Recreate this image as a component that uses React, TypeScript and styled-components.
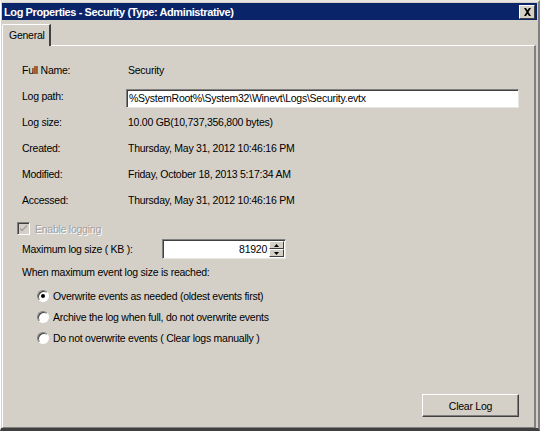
import React from 'react';
import styled, { createGlobalStyle } from 'styled-components';

const GlobalStyle = createGlobalStyle`
  html, body {
    margin: 0;
    padding: 0;
    background: #d4d0c8;
  }
  body {
    font-family: "Liberation Sans", Arial, sans-serif;
    font-size: 10.5px;
    letter-spacing: -0.25px;
    color: #000;
  }
`;

const info = [
  { label: 'Full Name:', value: 'Security' },
  { label: 'Log path:', value: '%SystemRoot%\\System32\\Winevt\\Logs\\Security.evtx', input: true },
  { label: 'Log size:', value: '10.00 GB(10,737,356,800 bytes)' },
  { label: 'Created:', value: 'Thursday, May 31, 2012 10:46:16 PM' },
  { label: 'Modified:', value: 'Friday, October 18, 2013 5:17:34 AM' },
  { label: 'Accessed:', value: 'Thursday, May 31, 2012 10:46:16 PM' },
];

const policies = [
  { label: 'Overwrite events as needed (oldest events first)', checked: true },
  { label: 'Archive the log when full, do not overwrite events', checked: false },
  { label: 'Do not overwrite events ( Clear logs manually )', checked: false },
];

export default function App() {
  return (
    <>
      <GlobalStyle />
      <Window>
        <TitleBar>
          <Title>Log Properties - Security (Type: Administrative)</Title>
          <CloseButton>
            <svg width="9" height="8" viewBox="0 0 9 8">
              <path d="M1 0h2l1.5 2.2L6 0h2L5.5 4 8 8H6L4.5 5.8 3 8H1l2.5-4z" fill="#000" />
            </svg>
          </CloseButton>
        </TitleBar>
        <Body>
          <TabStrip>
            <Tab>General</Tab>
          </TabStrip>
          <Panel>
            <InfoGrid>
              {info.map((row) => (
                <React.Fragment key={row.label}>
                  <Label>{row.label}</Label>
                  {row.input ? (
                    <PathInput>{row.value}</PathInput>
                  ) : (
                    <Value>{row.value}</Value>
                  )}
                </React.Fragment>
              ))}
            </InfoGrid>

            <EnableRow>
              <CheckBox>
                <svg width="9" height="9" viewBox="0 0 9 9">
                  <path d="M1 3.5l2 2 5-5v2l-5 5-2-2z" fill="#a0a0a0" />
                </svg>
              </CheckBox>
              <DisabledText>Enable logging</DisabledText>
            </EnableRow>

            <Settings>
              <SizeRow>
                <SizeLabel>Maximum log size ( KB ):</SizeLabel>
                <SpinBox>
                  <SpinValue>81920</SpinValue>
                  <Spinner>
                    <SpinArrow>
                      <svg width="5" height="3" viewBox="0 0 5 3"><path d="M2.5 0L5 3H0z" fill="#000" /></svg>
                    </SpinArrow>
                    <SpinArrow>
                      <svg width="5" height="3" viewBox="0 0 5 3"><path d="M0 0h5L2.5 3z" fill="#000" /></svg>
                    </SpinArrow>
                  </Spinner>
                </SpinBox>
              </SizeRow>
              <Text>When maximum event log size is reached:</Text>
              <RadioList>
                {policies.map((p) => (
                  <RadioRow key={p.label}>
                    <Radio>{p.checked && <Dot />}</Radio>
                    <span>{p.label}</span>
                  </RadioRow>
                ))}
              </RadioList>
            </Settings>

            <Footer>
              <Button>Clear Log</Button>
            </Footer>
          </Panel>
        </Body>
      </Window>
    </>
  );
}

const Window = styled.div`
  width: 540px;
  height: 431px;
  box-sizing: border-box;
  display: flex;
  flex-direction: column;
  background: #d4d0c8;
  border-top: 2px solid #e8e6e0;
  border-left: 1px solid #ffffff;
  border-right: 2px solid #808080;
  border-bottom: 3px solid #404040;
  overflow: hidden;
`;

const TitleBar = styled.div`
  height: 17px;
  margin: 1px 1px 0 1px;
  background: #0a246a;
  display: flex;
  align-items: center;
  justify-content: space-between;
  padding: 0 2px 0 2px;
`;

const Title = styled.span`
  color: #fff;
  font-weight: bold;
  font-size: 11px;
  letter-spacing: -0.4px;
`;

const CloseButton = styled.div`
  width: 16px;
  height: 14px;
  box-sizing: border-box;
  background: #d4d0c8;
  border-top: 1px solid #fff;
  border-left: 1px solid #fff;
  border-right: 1px solid #404040;
  border-bottom: 1px solid #404040;
  display: flex;
  align-items: center;
  justify-content: center;
`;

const Body = styled.div`
  flex: 1;
  display: flex;
  flex-direction: column;
  padding: 3px 0 0 1px;
`;

const TabStrip = styled.div`
  display: flex;
  height: 22px;
  align-items: flex-end;
  position: relative;
  z-index: 1;
`;

const Tab = styled.div`
  height: 22px;
  box-sizing: border-box;
  padding: 0 4px 1px 6px;
  display: flex;
  align-items: center;
  background: #d4d0c8;
  border-top: 1px solid #fff;
  border-left: 1px solid #fff;
  border-right: 2px solid #404040;
  border-top-left-radius: 2px;
  margin-bottom: -1px;
`;

const Panel = styled.div`
  flex: 1;
  display: flex;
  flex-direction: column;
  box-sizing: border-box;
  margin-right: 2px;
  border-top: 1px solid #fff;
  border-left: 1px solid #fff;
  border-right: 2px solid #808080;
  border-bottom: 1px solid #808080;
  padding: 11px 15px 10px 19px;
`;

const InfoGrid = styled.div`
  display: grid;
  grid-template-columns: 104px 1fr;
  grid-auto-rows: 26px;
  align-items: center;
`;

const Label = styled.span``;

const Value = styled.span`
  padding-left: 2px;
`;

const PathInput = styled.div`
  height: 19px;
  box-sizing: border-box;
  margin-top: 4px;
  background: #fff;
  border-top: 1px solid #808080;
  border-left: 1px solid #808080;
  border-right: 1px solid #e8e6e0;
  border-bottom: 1px solid #e8e6e0;
  box-shadow: inset 1px 1px 0 #404040;
  padding: 0 2px;
  display: flex;
  align-items: center;
`;

const EnableRow = styled.div`
  display: flex;
  align-items: center;
  gap: 5px;
  margin: 9px 0 0 -5px;
`;

const CheckBox = styled.div`
  width: 13px;
  height: 13px;
  box-sizing: border-box;
  background: #d4d0c8;
  border-top: 1px solid #808080;
  border-left: 1px solid #808080;
  border-right: 1px solid #fff;
  border-bottom: 1px solid #fff;
  box-shadow: inset 1px 1px 0 #404040;
  display: flex;
  align-items: center;
  justify-content: center;
`;

const DisabledText = styled.span`
  color: #a0a0a0;
  text-shadow: 1px 1px 0 #fff;
`;

const Settings = styled.div`
  display: flex;
  flex-direction: column;
`;

const SizeRow = styled.div`
  display: flex;
  align-items: center;
  margin-top: 4px;
`;

const SizeLabel = styled.span`
  width: 140px;
`;

const SpinBox = styled.div`
  width: 124px;
  height: 20px;
  box-sizing: border-box;
  background: #fff;
  border-top: 1px solid #808080;
  border-left: 1px solid #808080;
  border-right: 1px solid #e8e6e0;
  border-bottom: 1px solid #e8e6e0;
  box-shadow: inset 1px 1px 0 #404040;
  display: flex;
  align-items: center;
  padding: 1px 1px 1px 2px;
`;

const SpinValue = styled.span`
  flex: 1;
  text-align: right;
  padding-right: 2px;
`;

const Spinner = styled.div`
  width: 15px;
  height: 100%;
  display: flex;
  flex-direction: column;
`;

const SpinArrow = styled.div`
  flex: 1;
  box-sizing: border-box;
  background: #d4d0c8;
  border-top: 1px solid #fff;
  border-left: 1px solid #fff;
  border-right: 1px solid #404040;
  border-bottom: 1px solid #404040;
  display: flex;
  align-items: center;
  justify-content: center;
`;

const Text = styled.span`
  margin-top: 7px;
`;

const RadioList = styled.div`
  display: flex;
  flex-direction: column;
  gap: 8px;
  padding-left: 15px;
  margin-top: 11px;
`;

const RadioRow = styled.div`
  display: flex;
  align-items: center;
  gap: 4px;
  height: 13px;
`;

const Radio = styled.div`
  width: 12px;
  height: 12px;
  box-sizing: border-box;
  border-radius: 50%;
  background: #fff;
  border: 1px solid;
  border-color: #808080 #fff #fff #808080;
  box-shadow: inset 1px 1px 0 #404040;
  display: flex;
  align-items: center;
  justify-content: center;
`;

const Dot = styled.div`
  width: 4px;
  height: 4px;
  border-radius: 50%;
  background: #000;
`;

const Footer = styled.div`
  margin-top: auto;
  display: flex;
  justify-content: flex-end;
`;

const Button = styled.div`
  width: 97px;
  height: 23px;
  box-sizing: border-box;
  display: flex;
  align-items: center;
  justify-content: center;
  background: #d4d0c8;
  border-top: 1px solid #fff;
  border-left: 1px solid #fff;
  border-right: 1px solid #404040;
  border-bottom: 1px solid #404040;
  box-shadow: inset -1px -1px 0 #808080;
`;
